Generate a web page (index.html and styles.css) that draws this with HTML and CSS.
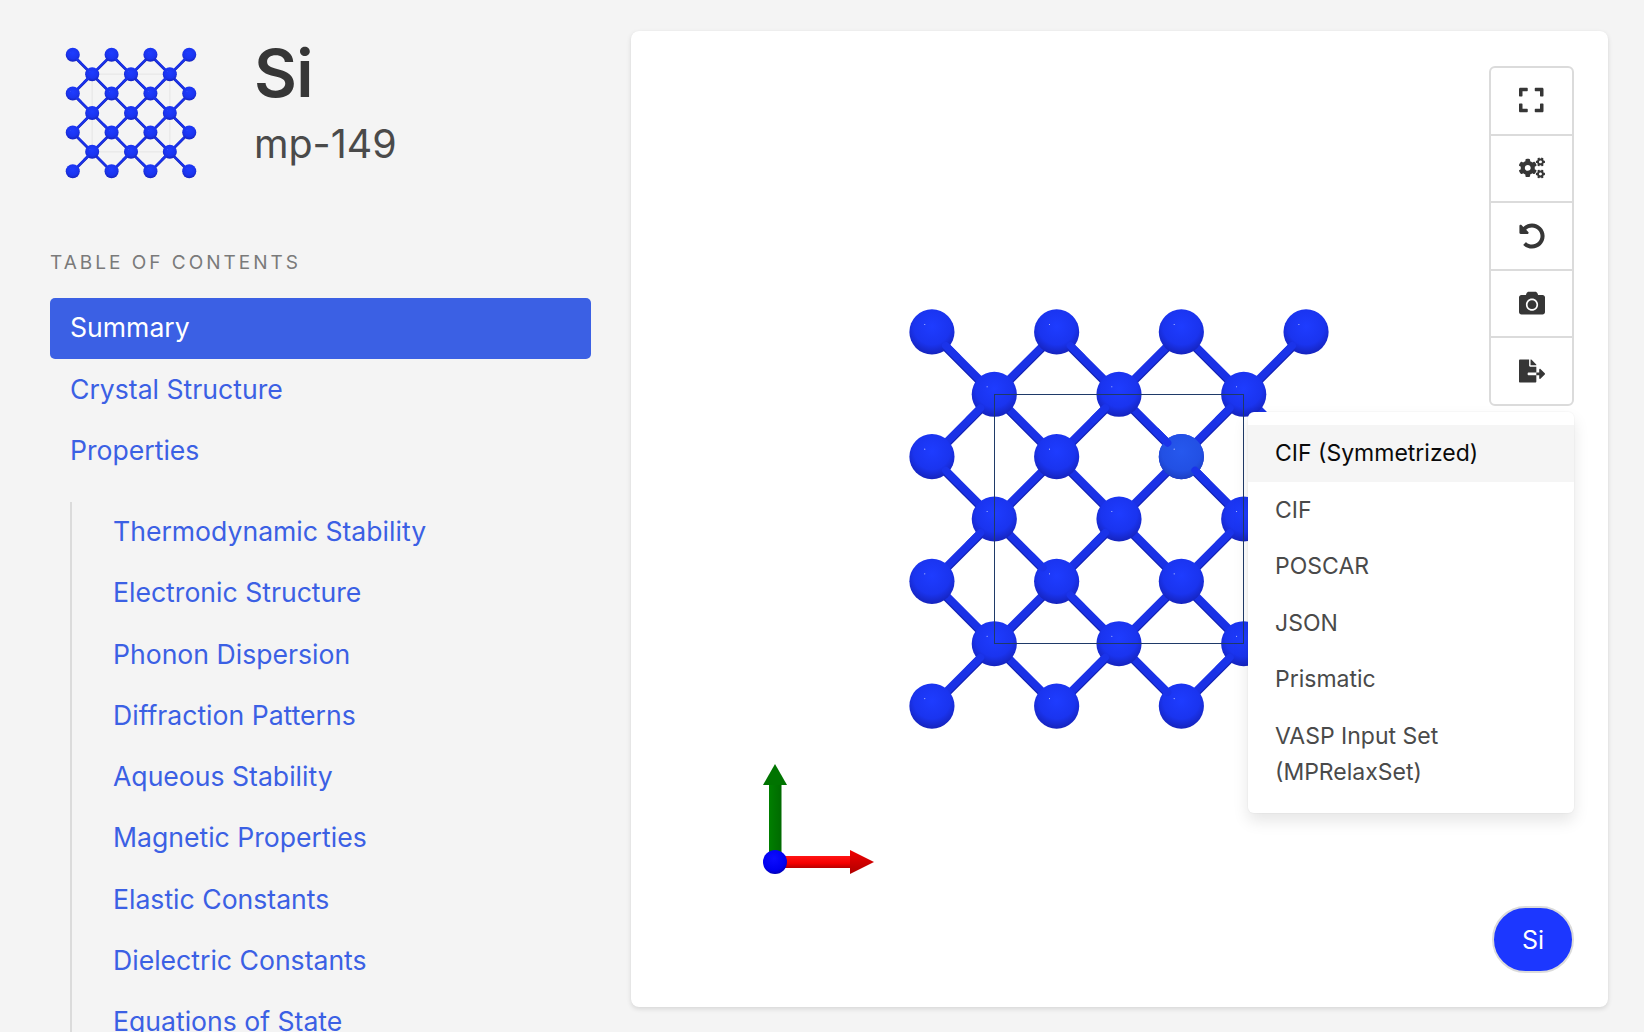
FILE: index.html
```html
<!DOCTYPE html>
<html lang="en">
<head>
<meta charset="utf-8">
<title>Si mp-149</title>
<link rel="stylesheet" href="styles.css">
</head>
<body>
<div class="page">
  <aside class="sidebar">
    <header class="material">
      <svg class="thumb" viewBox="-4 -4 68 68">
        <defs>
          <radialGradient id="atomFill" cx="50%" cy="38%" r="62%">
            <stop offset="0" stop-color="#1e3cff"/>
            <stop offset="0.65" stop-color="#1a34ef"/>
            <stop offset="1" stop-color="#1523bd"/>
          </radialGradient>
          <radialGradient id="atomHot" cx="50%" cy="38%" r="62%">
            <stop offset="0" stop-color="#2658ee"/>
            <stop offset="0.7" stop-color="#2250e4"/>
            <stop offset="1" stop-color="#1c3fc4"/>
          </radialGradient>
          <g id="atom"><circle r="3.62" fill="url(#atomFill)"/><circle cx="-1.15" cy="-1.2" r="0.09" fill="#c8d2ff"/></g>
          <g id="lattice">
            <path class="bond-shade" d="M0 0L60 60M20 0L60 40M40 0L60 20M0 20L40 60M0 40L20 60M0 20L20 0M0 40L40 0M0 60L60 0M20 60L60 20M40 60L60 40"/>
            <path class="bond" d="M0 0L60 60M20 0L60 40M40 0L60 20M0 20L40 60M0 40L20 60M0 20L20 0M0 40L40 0M0 60L60 0M20 60L60 20M40 60L60 40"/>
            <use href="#atom" x="0" y="0"/><use href="#atom" x="20" y="0"/><use href="#atom" x="40" y="0"/><use href="#atom" x="60" y="0"/>
            <use href="#atom" x="10" y="10"/><use href="#atom" x="30" y="10"/><use href="#atom" x="50" y="10"/>
            <use href="#atom" x="0" y="20"/><use href="#atom" x="20" y="20"/><use href="#atom" x="40" y="20"/><use href="#atom" x="60" y="20"/>
            <use href="#atom" x="10" y="30"/><use href="#atom" x="30" y="30"/><use href="#atom" x="50" y="30"/>
            <use href="#atom" x="0" y="40"/><use href="#atom" x="20" y="40"/><use href="#atom" x="40" y="40"/><use href="#atom" x="60" y="40"/>
            <use href="#atom" x="10" y="50"/><use href="#atom" x="30" y="50"/><use href="#atom" x="50" y="50"/>
            <use href="#atom" x="0" y="60"/><use href="#atom" x="20" y="60"/><use href="#atom" x="40" y="60"/><use href="#atom" x="60" y="60"/>
            <path class="bond-front" d="M2.2 2.2L4 4M22.2 2.2L24 4M57.8 2.2L56 4M7.8 12.2L6 14M27.8 12.2L26 14M47.8 12.2L46 14M37.8 17.8L36 16M42.2 22.2L44 24M2.2 22.2L4 24M7.8 32.2L6 34M27.8 32.2L26 34M47.8 32.2L46 34M17.8 37.8L16 36M22.2 42.2L24 44M7.8 52.2L6 54M27.8 52.2L26 54M47.8 52.2L46 54M37.8 57.8L36 56"/>
          </g>
        </defs>
        <rect class="cell-thumb" x="10" y="10" width="40" height="40"/>
        <use href="#lattice"/>
      </svg>
      <div class="material-text">
        <h1 class="formula">Si</h1>
        <p class="material-id">mp-149</p>
      </div>
    </header>
    <nav class="toc">
      <p class="toc-label">Table of Contents</p>
      <ul class="toc-list">
        <li><a class="toc-link is-active" href="#summary">Summary</a></li>
        <li><a class="toc-link" href="#crystal">Crystal Structure</a></li>
        <li><a class="toc-link" href="#properties">Properties</a>
          <ul class="toc-sub">
            <li><a class="toc-link" href="#t">Thermodynamic Stability</a></li>
            <li><a class="toc-link" href="#e">Electronic Structure</a></li>
            <li><a class="toc-link" href="#p">Phonon Dispersion</a></li>
            <li><a class="toc-link" href="#d">Diffraction Patterns</a></li>
            <li><a class="toc-link" href="#a">Aqueous Stability</a></li>
            <li><a class="toc-link" href="#m">Magnetic Properties</a></li>
            <li><a class="toc-link" href="#ec">Elastic Constants</a></li>
            <li><a class="toc-link" href="#dc">Dielectric Constants</a></li>
            <li><a class="toc-link" href="#eos">Equations of State</a></li>
          </ul>
        </li>
      </ul>
    </nav>
  </aside>

  <main class="viewer">
    <svg class="structure" viewBox="-4 -4 68 68">
      <use href="#lattice"/>
      <circle cx="40" cy="20" r="3.62" fill="url(#atomHot)"/>
      <circle cx="38.85" cy="18.8" r="0.09" fill="#c8d2ff"/>
      <path class="bond-front" d="M37.8 17.8L36 16M42.2 22.2L44 24"/>
      <rect class="cell" x="10" y="10" width="40" height="40"/>
    </svg>

    <svg class="axes" viewBox="0 0 130 130">
      <defs>
        <linearGradient id="redAxis" x1="0" y1="0" x2="0" y2="1">
          <stop offset="0" stop-color="#ff1414"/><stop offset="0.6" stop-color="#f50000"/><stop offset="1" stop-color="#b80000"/>
        </linearGradient>
        <linearGradient id="redHead" x1="0" y1="0" x2="0" y2="1">
          <stop offset="0" stop-color="#f00000"/><stop offset="1" stop-color="#b00000"/>
        </linearGradient>
        <linearGradient id="greenAxis" x1="0" y1="0" x2="1" y2="0">
          <stop offset="0" stop-color="#007f00"/><stop offset="1" stop-color="#006a00"/>
        </linearGradient>
        <radialGradient id="blueAxis" cx="45%" cy="35%" r="70%">
          <stop offset="0" stop-color="#0c0cff"/><stop offset="0.7" stop-color="#0000ee"/><stop offset="1" stop-color="#0000a8"/>
        </radialGradient>
      </defs>
      <rect x="19" y="28" width="12.5" height="72" fill="url(#greenAxis)"/>
      <path d="M25 8L37 29H13Z" fill="#007400"/>
      <rect x="25" y="100" width="76" height="12" fill="url(#redAxis)"/>
      <path d="M100 94L124 106L100 118Z" fill="url(#redHead)"/>
      <circle cx="25" cy="106" r="12" fill="url(#blueAxis)"/>
    </svg>

    <div class="toolbar">
      <button class="tool" type="button" aria-label="Fullscreen">
        <svg class="icon icon-expand" viewBox="0 0 448 512"><path d="M0 180V56c0-13.3 10.7-24 24-24h124c6.6 0 12 5.4 12 12v40c0 6.6-5.4 12-12 12H64v84c0 6.6-5.4 12-12 12H12c-6.6 0-12-5.4-12-12zm288-136v40c0 6.6 5.4 12 12 12h84v84c0 6.6 5.4 12 12 12h40c6.6 0 12-5.4 12-12V56c0-13.3-10.7-24-24-24H300c-6.6 0-12 5.4-12 12zm148 276h-40c-6.6 0-12 5.4-12 12v84h-84c-6.6 0-12 5.4-12 12v40c0 6.6 5.4 12 12 12h124c13.3 0 24-10.7 24-24V332c0-6.6-5.4-12-12-12zM160 468v-40c0-6.6-5.4-12-12-12H64v-84c0-6.6-5.4-12-12-12H12c-6.6 0-12 5.4-12 12v124c0 13.3 10.7 24 24 24h124c6.6 0 12-5.4 12-12z"/></svg>
      </button>
      <button class="tool" type="button" aria-label="Settings">
        <svg class="icon" viewBox="0 0 640 512"><path d="M512.1 191l-8.2 14.3c-3 5.3-9.4 7.5-15.1 5.4-11.8-4.4-22.6-10.7-32.1-18.6-4.6-3.8-5.8-10.5-2.8-15.7l8.2-14.3c-6.9-8-12.3-17.3-15.9-27.4h-16.5c-6 0-11.2-4.3-12.2-10.3-2-12-2.1-24.6 0-37.1 1-6 6.2-10.4 12.2-10.4h16.5c3.6-10.1 9-19.4 15.9-27.4l-8.2-14.3c-3-5.2-1.9-11.9 2.8-15.7 9.5-7.9 20.4-14.2 32.1-18.6 5.7-2.1 12.1.1 15.1 5.4l8.2 14.3c10.5-1.9 21.2-1.9 31.7 0L552 6.3c3-5.3 9.4-7.5 15.1-5.4 11.8 4.4 22.6 10.7 32.1 18.6 4.6 3.8 5.8 10.5 2.8 15.7l-8.2 14.3c6.9 8 12.3 17.3 15.9 27.4h16.5c6 0 11.2 4.3 12.2 10.3 2 12 2.1 24.6 0 37.1-1 6-6.2 10.4-12.2 10.4h-16.5c-3.6 10.1-9 19.4-15.9 27.4l8.2 14.3c3 5.2 1.9 11.9-2.8 15.7-9.5 7.9-20.4 14.2-32.1 18.6-5.7 2.1-12.1-.1-15.1-5.4l-8.2-14.3c-10.4 1.9-21.2 1.9-31.7 0zm-10.5-58.8c38.5 29.6 82.4-14.3 52.8-52.8-38.5-29.7-82.4 14.3-52.8 52.8zM386.3 286.1l33.7 16.8c10.1 5.8 14.5 18.1 10.5 29.1-8.9 24.2-26.4 46.4-42.6 65.8-7.4 8.9-20.2 11.1-30.3 5.3l-29.1-16.8c-16 13.7-34.6 24.6-54.9 31.7v33.6c0 11.6-8.3 21.6-19.7 23.6-24.6 4.2-50.4 4.4-75.9 0-11.5-2-20-11.9-20-23.6V418c-20.3-7.2-38.9-18-54.9-31.7L74 403c-10 5.8-22.9 3.6-30.3-5.3-16.2-19.4-33.3-41.6-42.2-65.7-4-10.9.4-23.2 10.5-29.1l33.3-16.8c-3.9-20.9-3.9-42.4 0-63.4L12 205.8c-10.1-5.8-14.6-18.1-10.5-29 8.9-24.2 26-46.4 42.2-65.8 7.4-8.9 20.2-11.1 30.3-5.3l29.1 16.8c16-13.7 34.6-24.6 54.9-31.7V57.1c0-11.5 8.2-21.5 19.6-23.5 24.6-4.2 50.5-4.4 76-.1 11.5 2 20 11.9 20 23.6v33.6c20.3 7.2 38.9 18 54.9 31.7l29.1-16.8c10-5.8 22.9-3.6 30.3 5.3 16.2 19.4 33.2 41.6 42.1 65.8 4 10.9.1 23.2-10 29.1l-33.7 16.8c3.9 21 3.9 42.5 0 63.5zm-117.6 21.1c59.2-77-28.7-164.9-105.7-105.7-59.2 77 28.7 164.9 105.7 105.7zm243.4 182.7l-8.2 14.3c-3 5.3-9.4 7.5-15.1 5.4-11.8-4.4-22.6-10.7-32.1-18.6-4.6-3.8-5.8-10.5-2.8-15.7l8.2-14.3c-6.9-8-12.3-17.3-15.9-27.4h-16.5c-6 0-11.2-4.3-12.2-10.3-2-12-2.1-24.6 0-37.1 1-6 6.2-10.4 12.2-10.4h16.5c3.6-10.1 9-19.4 15.9-27.4l-8.2-14.3c-3-5.2-1.9-11.9 2.8-15.7 9.5-7.9 20.4-14.2 32.1-18.6 5.7-2.1 12.1.1 15.1 5.4l8.2 14.3c10.5-1.9 21.2-1.9 31.7 0l8.2-14.3c3-5.3 9.4-7.5 15.1-5.4 11.8 4.4 22.6 10.7 32.1 18.6 4.6 3.8 5.8 10.5 2.8 15.7l-8.2 14.3c6.9 8 12.3 17.3 15.9 27.4h16.5c6 0 11.2 4.3 12.2 10.3 2 12 2.1 24.6 0 37.1-1 6-6.2 10.4-12.2 10.4h-16.5c-3.6 10.1-9 19.4-15.9 27.4l8.2 14.3c3 5.2 1.9 11.9-2.8 15.7-9.5 7.9-20.4 14.2-32.1 18.6-5.7 2.1-12.1-.1-15.1-5.4l-8.2-14.3c-10.4 1.9-21.2 1.9-31.7 0zM501.6 431c38.5 29.6 82.4-14.3 52.8-52.8-38.5-29.6-82.4 14.3-52.8 52.8z"/></svg>
      </button>
      <button class="tool" type="button" aria-label="Reset">
        <svg class="icon" viewBox="0 0 512 512"><path d="M255.545 8c-66.269.119-126.438 26.233-170.86 68.685L48.971 40.971C33.851 25.851 8 36.559 8 57.941V192c0 13.255 10.745 24 24 24h134.059c21.382 0 32.09-25.851 16.971-40.971l-41.75-41.75c30.864-28.899 70.801-44.907 113.23-45.273 92.398-.798 170.283 73.977 169.484 169.442C423.236 348.009 349.816 424 256 424c-41.127 0-79.997-14.678-110.63-41.556-4.743-4.161-11.906-3.908-16.368.553L89.34 422.659c-4.872 4.872-4.631 12.815.482 17.433C133.798 479.813 192.074 504 256 504c136.966 0 247.999-111.033 248-247.998C504.001 119.193 392.354 7.755 255.545 8z"/></svg>
      </button>
      <button class="tool" type="button" aria-label="Screenshot">
        <svg class="icon" viewBox="0 0 512 512"><path d="M512 144v288c0 26.5-21.5 48-48 48H48c-26.5 0-48-21.5-48-48V144c0-26.5 21.5-48 48-48h88l12.3-32.9c7-18.7 24.9-31.1 44.9-31.1h125.5c20 0 37.9 12.4 44.9 31.1L376 96h88c26.5 0 48 21.5 48 48zM376 288c0-66.2-53.8-120-120-120s-120 53.8-120 120 53.8 120 120 120 120-53.8 120-120zm-32 0c0 48.5-39.5 88-88 88s-88-39.5-88-88 39.5-88 88-88 88 39.5 88 88z"/></svg>
      </button>
      <button class="tool" type="button" aria-label="Export">
        <svg class="icon" viewBox="0 0 576 512"><path d="M384 121.9c0-6.3-2.5-12.4-7-16.9L279.1 7c-4.5-4.5-10.6-7-17-7H256v128h128zM571 308l-95.7-96.4c-10.1-10.1-27.4-3-27.4 11.3V288h-64v64h64v65.2c0 14.3 17.3 21.4 27.4 11.3L571 332c6.6-6.6 6.6-17.4 0-24zm-379 28v-32c0-8.8 7.2-16 16-16h176V160H248c-13.2 0-24-10.8-24-24V0H24C10.7 0 0 10.7 0 24v464c0 13.3 10.7 24 24 24h336c13.3 0 24-10.7 24-24V352H208c-8.8 0-16-7.2-16-16z"/></svg>
      </button>
    </div>

    <ul class="menu">
      <li class="menu-item is-hover">CIF (Symmetrized)</li>
      <li class="menu-item">CIF</li>
      <li class="menu-item">POSCAR</li>
      <li class="menu-item">JSON</li>
      <li class="menu-item">Prismatic</li>
      <li class="menu-item">VASP Input Set (MPRelaxSet)</li>
    </ul>

    <button class="legend" type="button">Si</button>
  </main>
</div>
</body>
</html>
```

FILE: styles.css
```css
* { box-sizing: border-box; }
html, body { margin: 0; height: 100%; overflow: hidden; }
body {
  background: #f4f4f4;
  color: #4a4a4a;
  font-family: Inter, "Liberation Sans", sans-serif;
}
.page {
  display: flex;
  gap: 40px;
  height: 1032px;
  padding: 31px 36px 25px 50px;
}
.sidebar { flex: 0 0 541px; min-width: 0; }

.material { display: flex; align-items: flex-start; height: 220px; padding: 16px 0 0 15px; }
.thumb { width: 132px; height: 132px; flex: none; }
.material-text { margin-left: 57px; margin-top: -16px; }
.formula { margin: 0; font-size: 66px; line-height: 85px; font-weight: 600; color: #363636; letter-spacing: -0.01em; }
.material-id { margin: -2px 0 0; font-size: 39.4px; line-height: 60px; font-weight: 400; color: #4a4a4a; }

.bond { fill: none; stroke: #1a31e6; stroke-width: 1.25; }
.bond-shade { fill: none; stroke: #1322b4; stroke-width: 1.25; transform: translateY(0.28px); }
.bond-front { fill: none; stroke: #1a33ea; stroke-width: 1.2; stroke-linecap: round; }
.cell { fill: none; stroke: #1f3a68; stroke-width: 1px; vector-effect: non-scaling-stroke; shape-rendering: crispEdges; }
.cell-thumb { fill: none; stroke: #e4e4e4; stroke-width: 1px; vector-effect: non-scaling-stroke; }

.toc-label {
  margin: 0 0 23px;
  font-size: 19px;
  line-height: 24px;
  letter-spacing: 3px;
  text-transform: uppercase;
  color: #7a7a7a;
}
.toc-list, .toc-sub { list-style: none; margin: 0; padding: 0; }
.toc-link {
  display: block;
  padding: 0 20px;
  height: 61px;
  line-height: 58px;
  font-size: 26.6px;
  color: #3b60e4;
  text-decoration: none;
  border-radius: 5px;
}
.toc-link.is-active { background: #3b60e4; color: #fff; margin-bottom: 1px; }
.toc-sub { margin: 20px 0 0 20px; padding-left: 41px; border-left: 2px solid #dbdbdb; }
.toc-sub .toc-link { padding: 0; height: 61.25px; line-height: 58px; }

.viewer {
  position: relative;
  flex: 1;
  background: #fff;
  border-radius: 8px;
  box-shadow: 0 2px 5px rgba(10, 10, 10, 0.12), 0 0 1px rgba(10, 10, 10, 0.05);
}
.structure { position: absolute; left: 276px; top: 276px; width: 424px; height: 424px; }
.axes { position: absolute; left: 119px; top: 725px; width: 130px; height: 130px; }

.toolbar {
  position: absolute;
  top: 35px;
  right: 34px;
  width: 85px;
  display: flex;
  flex-direction: column;
  border: 2px solid #dbdbdb;
  border-radius: 6px;
  background: #fff;
}
.tool {
  display: flex;
  align-items: center;
  justify-content: center;
  height: 67.5px;
  padding: 0;
  background: none;
  border: 0;
  border-bottom: 2px solid #dbdbdb;
}
.tool:first-child .icon { margin-top: -2px; }
.tool:last-child { border-bottom: 0; height: 65.5px; }
.icon { width: 26px; height: 26px; fill: #363636; }
.icon-expand { width: 24.5px; height: 28px; }

.menu {
  position: absolute;
  top: 381px;
  right: 34px;
  width: 326px;
  margin: 0;
  padding: 13px 0 12px;
  list-style: none;
  background: #fff;
  border-radius: 6px;
  box-shadow: 0 8px 16px rgba(10, 10, 10, 0.1), 0 0 0 1px rgba(10, 10, 10, 0.02);
  font-size: 23px;
  line-height: 36.4px;
  color: #4a4a4a;
}
.menu-item { padding: 10.1px 27px; }
.menu-item.is-hover { background: #f5f5f5; color: #0a0a0a; }

.legend {
  position: absolute;
  right: 34px;
  bottom: 34px;
  width: 82px;
  height: 67px;
  padding: 0;
  border: 2px solid #dbdbdb;
  border-radius: 34px;
  background: #1c37ff;
  color: #fff;
  font: 400 25px Inter, "Liberation Sans", sans-serif;
}
```
